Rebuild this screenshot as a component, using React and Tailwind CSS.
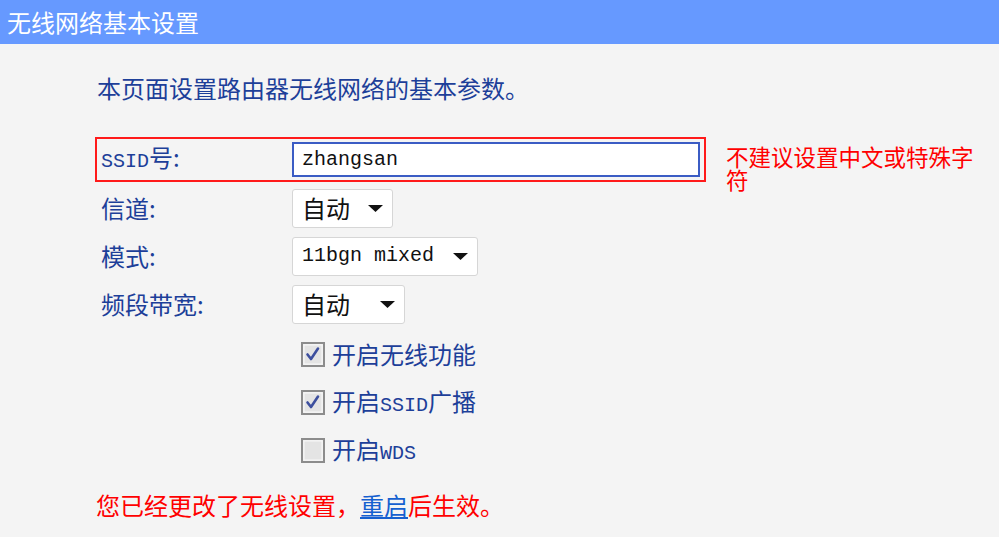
import React from "react";

const cjk = { fontFamily: '"Noto Sans CJK SC", "Liberation Sans", sans-serif' };
const mono = { fontFamily: '"Liberation Mono", "Noto Sans CJK SC", monospace' };

const Arrow = () => (
    <svg width="15" height="7" viewBox="0 0 15 7" className="shrink-0">
        <path d="M0 0 L15 0 L7.5 7 Z" fill="#111" />
    </svg>
);

const FakeSelect = ({ width, children, isMono }) => (
    <div
        className="h-[39px] bg-white border border-[#d6d6d6] rounded-[3px] flex items-center justify-between pl-[9px] pr-[9px]"
        style={{ width }}
    >
        <span className={isMono ? "text-[20px] text-[#111]" : "text-[24px] text-[#111]"} style={isMono ? mono : cjk}>
            {children}
        </span>
        <Arrow />
    </div>
);

const CheckBox = ({ checked }) => (
    <svg width="24" height="25" viewBox="0 0 24 25" className="shrink-0">
        <rect x="1" y="1" width="22" height="23" fill="#eeeeee" stroke="#8c8c8c" strokeWidth="2" />
        <rect x="3" y="3" width="18" height="19" fill="#e4e4e4" stroke="#f8f8f8" strokeWidth="1" />
        {checked && (
            <path d="M6.5 12.5 L10 17 L17 6.5" fill="none" stroke="#3d4f9e" strokeWidth="2.6" strokeLinecap="round" strokeLinejoin="round" />
        )}
    </svg>
);

const Ascii = ({ children }) => (
    <span className="text-[20px]" style={mono}>{children}</span>
);

const App = () => {
    return (
        <div className="w-[999px] h-[537px] overflow-hidden bg-[#f4f4f4] text-[#1d3f99]" style={cjk}>
            <div className="h-[44px] bg-[#6699ff] flex items-center pl-[7px] text-white text-[24px] leading-[24px]">
                无线网络基本设置
            </div>

            <div className="mt-[32px] pl-[97px] text-[24px] leading-[24px]">
                本页面设置路由器无线网络的基本参数。
            </div>

            <div className="mt-[37px]">
                <div className="flex items-start h-[45px]">
                    <div className="ml-[95px] w-[611px] h-[45px] border-2 border-[#ff1a1a] flex items-center">
                        <div className="w-[195px] pl-[4px] text-[24px] leading-[24px]">
                            <Ascii>SSID</Ascii>号:
                        </div>
                        <div className="w-[408px] h-[35px] bg-white border-2 border-[#3b5cc4] flex items-center pl-[8px]">
                            <span className="text-[20px] text-[#111]" style={mono}>zhangsan</span>
                        </div>
                    </div>
                    <div className="ml-[20px] w-[262px] mt-[8px] text-[22.5px] leading-[23px] text-[#ff0000]">
                        不建议设置中文或特殊字符
                    </div>
                </div>

                <div className="mt-[2px]">
                    <div className="h-[48px] flex items-center">
                        <div className="w-[292px] pl-[101px] text-[24px]">信道:</div>
                        <FakeSelect width="101px">自动</FakeSelect>
                    </div>
                    <div className="h-[48px] flex items-center">
                        <div className="w-[292px] pl-[101px] text-[24px]">模式:</div>
                        <FakeSelect width="186px" isMono>11bgn mixed</FakeSelect>
                    </div>
                    <div className="h-[48px] flex items-center">
                        <div className="w-[292px] pl-[101px] text-[24px]">频段带宽:</div>
                        <FakeSelect width="113px">自动</FakeSelect>
                    </div>
                </div>

                <div className="mt-[2px] pl-[301px]">
                    <div className="h-[48px] flex items-center gap-[7px] text-[24px]">
                        <CheckBox checked />
                        <span>开启无线功能</span>
                    </div>
                    <div className="h-[48px] flex items-center gap-[7px] text-[24px]">
                        <CheckBox checked />
                        <span>开启<Ascii>SSID</Ascii>广播</span>
                    </div>
                    <div className="h-[48px] flex items-center gap-[7px] text-[24px]">
                        <CheckBox />
                        <span>开启<Ascii>WDS</Ascii></span>
                    </div>
                </div>

                <div className="mt-[19px] pl-[96px] text-[24px] leading-[24px] text-[#ff0000]">
                    您已经更改了无线设置，<a href="#" className="text-[#1560d0] underline">重启</a>后生效。
                </div>
            </div>
        </div>
    );
};

export default App;
